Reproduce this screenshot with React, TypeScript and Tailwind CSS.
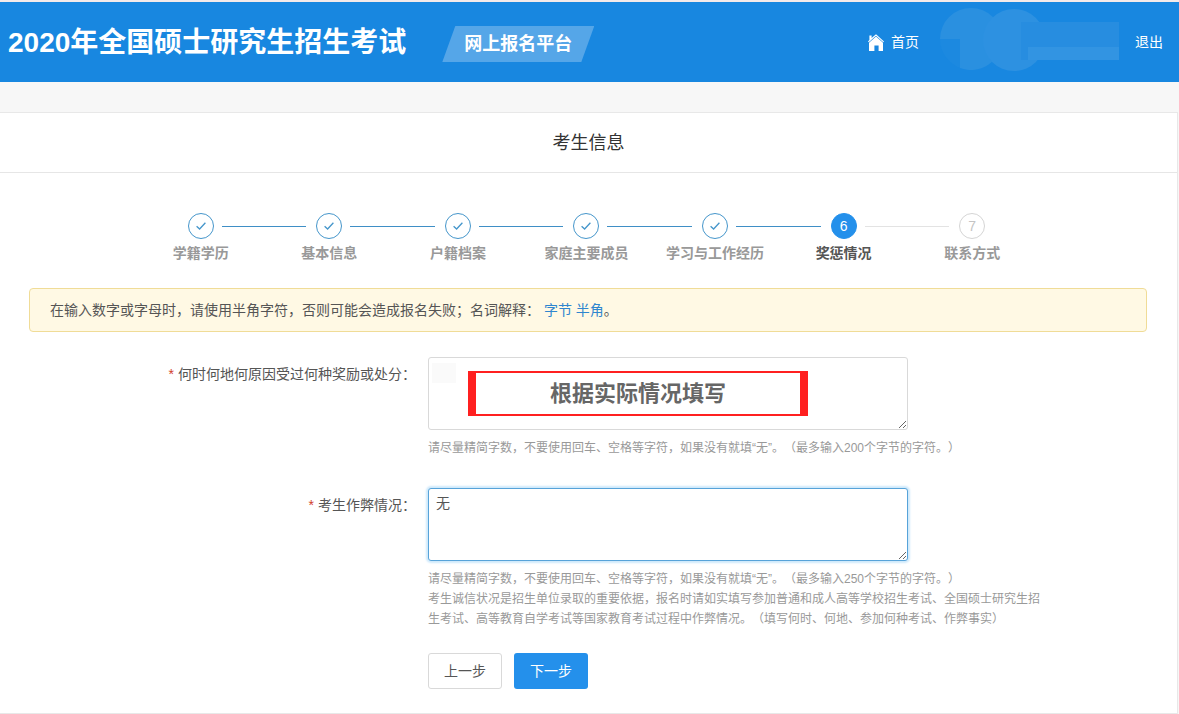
import type { ReactNode } from 'react'
import clsx from 'clsx'

const steps = ['学籍学历', '基本信息', '户籍档案', '家庭主要成员', '学习与工作经历', '奖惩情况', '联系方式']
const current = 5

function HomeIcon() {
  return (
    <svg viewBox="0 0 16 17" className="h-[17px] w-4" fill="currentColor" aria-hidden="true">
      <path d="M8 0.2 16 7.4l-.7.9L8 1.8.7 8.3 0 7.4 1.4 6V1.4h2.2V4z" />
      <path d="M8 2.6 15 8.8V17h-4.4v-5.4H6.4V17H1V8.8z" />
    </svg>
  )
}

function UserMask() {
  return (
    <svg viewBox="0 0 179 64" className="h-16 w-[179px]" aria-hidden="true">
      <path d="M0 32a31 31 0 1 1 62 0a31 31 0 0 1-42 29V32z" fill="#2a90e0" />
      <path d="M0 32h20v29A31 31 0 0 1 0 32z" fill="#1c89e0" />
      <circle cx="74" cy="33" r="31" fill="#2d91e1" />
      <path d="M81 15h98v38H81z" fill="#278de0" />
      <path d="M88 40h91v13H88z" fill="#3294e2" />
    </svg>
  )
}

function Header() {
  return (
    <header className="flex h-[82px] items-center border-t-2 border-[#f3eaea] bg-[#1887e0] pr-4 pl-2 text-white">
      <h1 className="pt-0.5 text-[28px] leading-10 font-bold">2020年全国硕士研究生招生考试</h1>
      <span className="mt-1 ml-9 flex h-9 w-[152px] items-center justify-center bg-[#55a6e8] text-lg font-bold [clip-path:polygon(13px_0,100%_0,calc(100%-13px)_100%,0_100%)]">
        网上报名平台
      </span>
      <nav className="ml-auto flex items-center">
        <a href="#" className="flex items-center gap-[7px]">
          <HomeIcon />
          首页
        </a>
        <span className="mr-4 ml-[21px] -mt-1.5">
          <UserMask />
        </span>
        <a href="#">退出</a>
      </nav>
    </header>
  )
}

function StepLine({ index, side }: { index: number; side: 'left' | 'right' }) {
  const hidden = index < 0 || index >= steps.length - 1
  return (
    <span className={clsx('w-[calc(50%-13px)]', side === 'left' ? 'pr-[10px]' : 'pl-2')}>
      <span
        className={clsx('block h-px', hidden ? 'bg-transparent' : index < current ? 'bg-[#3f8fc6]' : 'bg-[#e3e3e3]')}
      />
    </span>
  )
}

function Steps() {
  return (
    <ol className="mx-auto grid w-full max-w-[904px] grid-cols-7 pt-10 pr-1">
      {steps.map((label, i) => (
        <li key={label} className="text-center">
          <div className="flex items-center">
            <StepLine index={i - 1} side="left" />
            <span
              className={clsx(
                'grid size-[26px] shrink-0 place-items-center rounded-full border',
                i < current && 'border-[#4596cb] text-[#4596cb]',
                i === current && 'border-[#2490eb] bg-[#2490eb] text-white',
                i > current && 'border-[#d5d5d5] text-[#c4c4c4]',
              )}
            >
              {i < current ? (
                <svg viewBox="0 0 10 8" className="h-2 w-2.5" fill="none" stroke="currentColor" strokeWidth="1.3" aria-hidden="true">
                  <path d="M.6 4.2 3.6 7 9.4.8" />
                </svg>
              ) : (
                i + 1
              )}
            </span>
            <StepLine index={i} side="right" />
          </div>
          <p className={clsx('mt-1 leading-5 font-bold', i === current ? 'text-[#555]' : 'text-[#999]')}>{label}</p>
        </li>
      ))}
    </ol>
  )
}

function Field({ id, label, help, children }: { id: string; label: string; help: ReactNode; children: ReactNode }) {
  return (
    <div className="flex">
      <label htmlFor={id} className="w-[416px] shrink-0 text-right leading-[34px]">
        <span className="mr-1 text-[#d0402b]">*</span>
        {label}
      </label>
      <div className="ml-3 min-w-0 max-w-[620px]">
        {children}
        <div className="mt-2 text-xs leading-5 text-[#999]">{help}</div>
      </div>
    </div>
  )
}

export default function App() {
  return (
    <div
      lang="zh-CN"
      className="bg-[#f7f7f7] font-['Liberation_Sans','Noto_Sans_CJK_SC',sans-serif] text-sm text-[#555] [text-spacing-trim:space-all]"
    >
      <Header />
      <main className="mt-[30px] mr-px border-y border-r border-[#e8e8e8] bg-white">
        <h2 className="border-b border-[#e6e6e6] pt-0.5 text-center text-lg leading-[57px] text-[#333]">考生信息</h2>
        <Steps />
        <p className="mt-[25px] mr-[30px] ml-[29px] rounded-sm border border-[#f0dc97] bg-[#fff9e4] px-5 leading-[42px]">
          在输入数字或字母时，请使用半角字符，否则可能会造成报名失败；名词解释：{' '}
          <a href="#" className="text-[#2f86cf]">字节</a>{' '}
          <a href="#" className="text-[#2f86cf]">半角</a>。
        </p>

        <form className="mt-[25px] pb-6">
          <Field
            id="awards"
            label="何时何地何原因受过何种奖励或处分："
            help="请尽量精简字数，不要使用回车、空格等字符，如果没有就填“无”。（最多输入200个字节的字符。）"
          >
            <div className="relative w-[480px]">
              <textarea
                id="awards"
                className="block h-[73px] w-full rounded-[3px] border border-[#d9d9d9] bg-white px-[7px] py-1 leading-5 outline-none"
              />
              <span className="absolute top-1.5 left-1 h-5 w-6 bg-[#fafafa]" />
              <div className="absolute top-3.5 left-10 flex h-[45px] w-[340px] items-center justify-center border-x-8 border-y-2 border-[#ff2020] bg-white text-[22px] font-bold text-[#666]">
                根据实际情况填写
              </div>
            </div>
          </Field>

          <div className="mt-[30px]">
            <Field
              id="cheating"
              label="考生作弊情况："
              help={
                <>
                  <p>请尽量精简字数，不要使用回车、空格等字符，如果没有就填“无”。（最多输入250个字节的字符。）</p>
                  <p>
                    考生诚信状况是招生单位录取的重要依据，报名时请如实填写参加普通和成人高等学校招生考试、全国硕士研究生招生考试、高等教育自学考试等国家教育考试过程中作弊情况。（填写何时、何地、参加何种考试、作弊事实）
                  </p>
                </>
              }
            >
              <textarea
                id="cheating"
                defaultValue="无"
                className="block h-[73px] w-[480px] rounded-[3px] border border-[#57a3d9] bg-white px-[7px] py-1 leading-5 shadow-[0_0_2px_2px_#cfe9fb] outline-none"
              />
            </Field>
          </div>

          <div className="mt-6 ml-[428px] flex gap-3">
            <button type="button" className="h-9 w-[74px] rounded-[3px] border border-[#d9d9d9] bg-white">
              上一步
            </button>
            <button type="button" className="h-9 w-[74px] rounded-[3px] bg-[#2490eb] text-white">
              下一步
            </button>
          </div>
        </form>
      </main>
    </div>
  )
}
